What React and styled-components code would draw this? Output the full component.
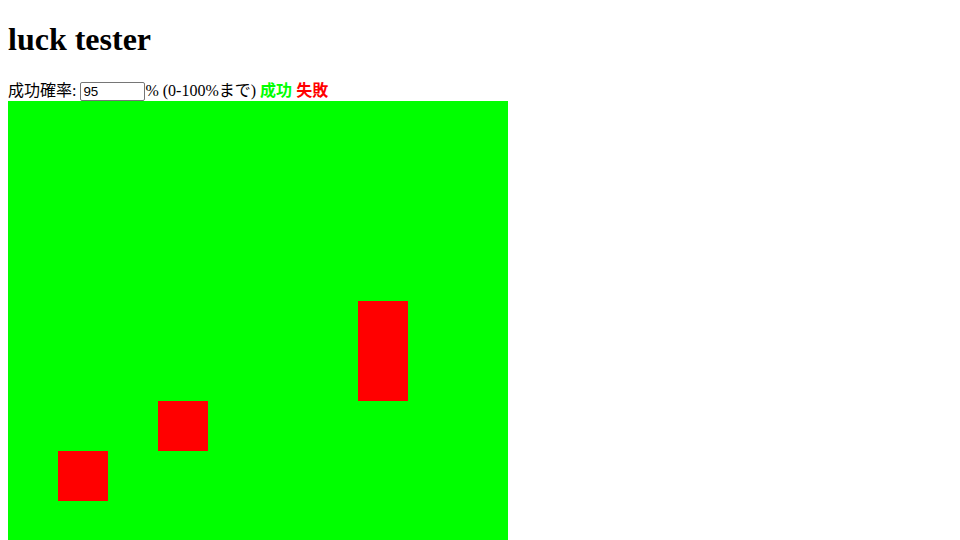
import React, { useState } from 'react';
import styled, { createGlobalStyle } from 'styled-components';

const GlobalStyle = createGlobalStyle`
    body {
        margin: 8px;
        font-family: "Liberation Serif", "Noto Sans CJK JP", serif;
        font-size: 16px;
        color: #000000;
        background: #ffffff;
    }
`;

const Title = styled.h1`
    font-size: 32px;
    font-weight: bold;
    margin: 13.44px 0 21.44px;
`;

const Controls = styled.div`
    line-height: 21px;
`;

const RateInput = styled.input`
    width: 59px;
    height: 15px;
    padding: 1px 2px;
    font-family: "Liberation Sans", sans-serif;
    font-size: 13.33px;
    border: 1px solid #767676;
    border-radius: 2px;
    vertical-align: baseline;
`;

const Legend = styled.b`
    color: ${(p) => p.$color};
`;

const Board = styled.div`
    display: grid;
    grid-template-columns: repeat(10, 50px);
    grid-auto-rows: 50px;
    width: 500px;
`;

const Cell = styled.div`
    background: ${(p) => (p.$fail ? '#ff0000' : '#00ff00')};
`;

const failed = new Set([47, 57, 63, 71]);

export default function App() {
    const [rate, setRate] = useState('95');
    return (
        <>
            <GlobalStyle />
            <Title>luck tester</Title>
            <Controls>
                成功確率: <RateInput type="text" value={rate} onChange={(e) => setRate(e.target.value)} />% (0-100%まで){' '}
                <Legend $color="#00ff00">成功</Legend> <Legend $color="#ff0000">失敗</Legend>
            </Controls>
            <Board>
                {Array.from({ length: 100 }, (_, i) => (
                    <Cell key={i} $fail={failed.has(i)} />
                ))}
            </Board>
        </>
    );
}
